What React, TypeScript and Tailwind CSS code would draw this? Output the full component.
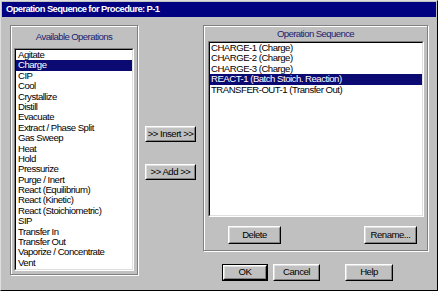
import React from 'react';

const available = [
  'Agitate',
  'Charge',
  'CIP',
  'Cool',
  'Crystallize',
  'Distill',
  'Evacuate',
  'Extract / Phase Split',
  'Gas Sweep',
  'Heat',
  'Hold',
  'Pressurize',
  'Purge / Inert',
  'React (Equilibrium)',
  'React (Kinetic)',
  'React (Stoichiometric)',
  'SIP',
  'Transfer In',
  'Transfer Out',
  'Vaporize / Concentrate',
  'Vent',
];

const sequence = [
  'CHARGE-1 (Charge)',
  'CHARGE-2 (Charge)',
  'CHARGE-3 (Charge)',
  'REACT-1 (Batch Stoich. Reaction)',
  'TRANSFER-OUT-1 (Transfer Out)',
];

function Button({ label, width, isDefault }: { label: string; width: string; isDefault?: boolean }) {
  return (
    <div className={`${width} ${isDefault ? 'border border-black' : ''} flex`}>
      <div className="flex-1 flex border border-t-white border-l-white border-r-black border-b-black">
        <div className="flex-1 flex items-center justify-center whitespace-nowrap border border-t-[#dfdfdf] border-l-[#dfdfdf] border-r-[#808080] border-b-[#808080] bg-[#c0c0c0] text-[9.6px] text-black">
          {label}
        </div>
      </div>
    </div>
  );
}

function ListBox({
  items,
  selected,
  className,
  padLeft,
}: {
  items: string[];
  selected: number;
  className: string;
  padLeft: string;
}) {
  return (
    <div className={`${className} flex border border-t-[#808080] border-l-[#808080] border-r-white border-b-white`}>
      <div className="flex-1 bg-white border border-t-black border-l-black border-r-[#dfdfdf] border-b-[#dfdfdf]">
        {items.map((item, i) => (
          <div
            key={item}
            className={`h-[10.4px] flex items-center whitespace-nowrap ${padLeft} text-[9.6px] ${
              i === selected ? 'bg-[#0a0a72] text-white' : 'text-black'
            }`}
          >
            {item}
          </div>
        ))}
      </div>
    </div>
  );
}

export default function App() {
  return (
    <div
      className="w-[438px] h-[291px] bg-[#c0c0c0] border border-t-[#dfdfdf] border-l-[#dfdfdf] border-r-black border-b-black p-px flex flex-col tracking-[-0.5px]"
      style={{ fontFamily: '"Liberation Sans", Arial, sans-serif' }}
    >
      {/* Title bar */}
      <div className="h-[15px] bg-[#000080] flex items-center pl-[4px] text-white font-bold text-[9.4px] tracking-[-0.6px]">
        Operation Sequence for Procedure: P-1
      </div>

      <div className="flex pl-[8px] pt-[8px]">
        {/* Available operations */}
        <div className="w-[128px] h-[250px] border border-[#808080] shadow-[inset_1px_1px_0_white,1px_1px_0_white] flex flex-col p-px">
          <div className="h-[21px] flex items-center justify-center text-[9.6px] text-[#1c1c6e] tracking-[-0.6px]">
            Available Operations
          </div>
          <ListBox items={available} selected={1} className="mx-[2px] h-[223px]" padLeft="pl-[2px]" />
        </div>

        {/* Middle buttons */}
        <div className="w-[65px] flex flex-col pl-[7px] pt-[101px]">
          <div className="h-[16px] flex">
            <Button label=">> Insert >>" width="w-[51px]" />
          </div>
          <div className="h-[16px] flex mt-[22px]">
            <Button label=">> Add >>" width="w-[51px]" />
          </div>
        </div>

        {/* Right side */}
        <div className="w-[225px] flex flex-col">
          <div className="h-[226px] border border-[#808080] shadow-[inset_1px_1px_0_white,1px_1px_0_white] flex flex-col p-px">
            <div className="h-[14px] flex items-center justify-center text-[9.6px] text-[#1c1c6e] tracking-[-0.6px]">
              Operation Sequence
            </div>
            <ListBox items={sequence} selected={3} className="ml-[3px] mr-[2px] h-[176px]" padLeft="pl-[1px]" />
            <div className="flex justify-between pl-[23px] pr-[9px] mt-[9px] h-[18px]">
              <Button label="Delete" width="w-[53px]" />
              <Button label="Rename..." width="w-[53px]" />
            </div>
          </div>
          <div className="flex pl-[19px] mt-[13px] h-[17px]">
            <Button label="OK" width="w-[46px]" isDefault />
            <div className="w-[5px]" />
            <Button label="Cancel" width="w-[47px]" />
            <div className="w-[25px]" />
            <Button label="Help" width="w-[48px]" />
          </div>
        </div>
      </div>
    </div>
  );
}
